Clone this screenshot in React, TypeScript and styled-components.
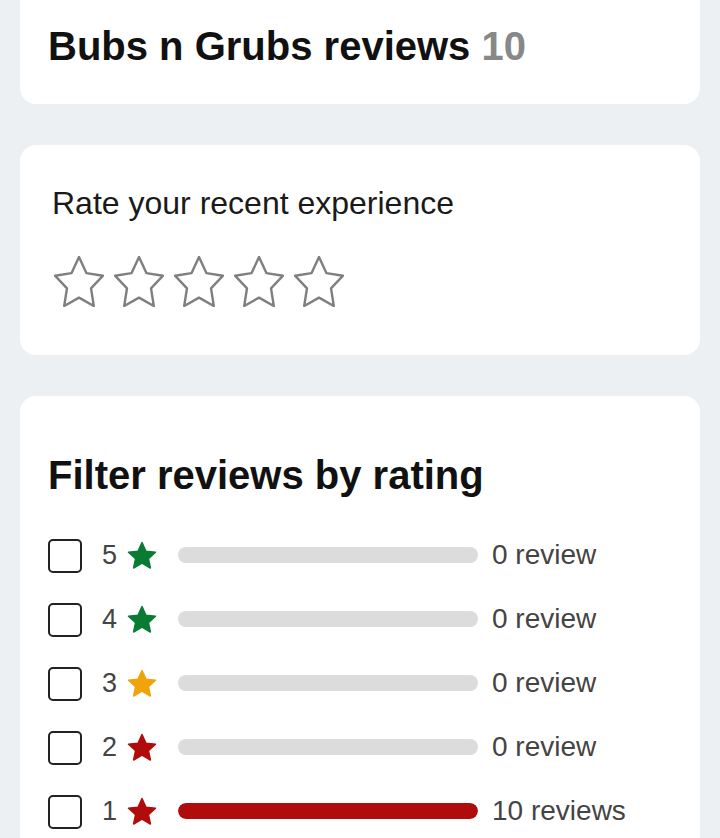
import styled, { createGlobalStyle } from "styled-components";

const GlobalStyle = createGlobalStyle`
  html, body {
    margin: 0;
    padding: 0;
    background: #edf0f2;
    font-family: "Liberation Sans", Arial, sans-serif;
  }
`;

const ratings = [
  { stars: 5, count: 0, color: "#0b7a33" },
  { stars: 4, count: 0, color: "#0b7a33" },
  { stars: 3, count: 0, color: "#f0a30a" },
  { stars: 2, count: 0, color: "#b00c0c" },
  { stars: 1, count: 10, color: "#b00c0c" },
];

const total = ratings.reduce((sum, r) => sum + r.count, 0);

const OUTLINE_POINTS =
  "25,1 32.4,17.1 49,19.7 37,32.3 39.8,50 25,41.6 10.2,50 13,32.3 1,19.7 17.6,17.1";

const SMALL_POINTS =
  "15,1.5 19,10.2 28.5,11.2 21.4,17.6 23.4,27 15,22.2 6.6,27 8.6,17.6 1.5,11.2 11,10.2";

function OutlineStar() {
  return (
    <svg width="50" height="51" viewBox="0 0 50 51">
      <polygon
        points={OUTLINE_POINTS}
        fill="none"
        stroke="#7f7f7f"
        strokeWidth="2.4"
        strokeLinejoin="round"
      />
    </svg>
  );
}

function SmallStar({ color }: { color: string }) {
  return (
    <svg width="30" height="29" viewBox="0 0 30 29">
      <polygon
        points={SMALL_POINTS}
        fill={color}
        stroke={color}
        strokeWidth="1.5"
        strokeLinejoin="round"
      />
    </svg>
  );
}

export default function App() {
  return (
    <Page>
      <GlobalStyle />

      <HeaderCard>
        <Heading>
          Bubs n Grubs reviews <Count>10</Count>
        </Heading>
      </HeaderCard>

      <RateCard>
        <RateTitle>Rate your recent experience</RateTitle>
        <StarRow>
          {[0, 1, 2, 3, 4].map((i) => (
            <StarButton key={i} aria-label={`${i + 1} stars`}>
              <OutlineStar />
            </StarButton>
          ))}
        </StarRow>
      </RateCard>

      <FilterCard>
        <Heading>Filter reviews by rating</Heading>
        <FilterList>
          {ratings.map((r) => (
            <FilterRow key={r.stars}>
              <Checkbox />
              <RatingNumber>{r.stars}</RatingNumber>
              <StarWrap>
                <SmallStar color={r.color} />
              </StarWrap>
              <Track>
                <Fill
                  style={{ width: `${total ? (r.count / total) * 100 : 0}%` }}
                />
              </Track>
              <ReviewCount>
                {r.count} {r.count > 1 ? "reviews" : "review"}
              </ReviewCount>
            </FilterRow>
          ))}
        </FilterList>
      </FilterCard>
    </Page>
  );
}

const Page = styled.div`
  padding: 0 20px;
  display: flex;
  flex-direction: column;
  gap: 41px;
  min-height: 838px;
  box-sizing: border-box;
`;

const Card = styled.section`
  background: #ffffff;
  border-radius: 16px;
  box-sizing: border-box;
`;

const HeaderCard = styled(Card)`
  margin-top: -20px;
  padding: 42px 28px 34px;
`;

const Heading = styled.h2`
  margin: 0;
  font-size: 40px;
  line-height: 48px;
  font-weight: 700;
  color: #111111;
`;

const Count = styled.span`
  color: #888888;
`;

const RateCard = styled(Card)`
  padding: 40px 32px 48px;
`;

const RateTitle = styled.p`
  margin: 0;
  font-size: 32px;
  line-height: 36px;
  color: #1a1a1a;
`;

const StarRow = styled.div`
  display: flex;
  gap: 10px;
  margin: 35px 0 0 2px;
`;

const StarButton = styled.button`
  border: 0;
  padding: 0;
  background: none;
  display: flex;
  cursor: pointer;
`;

const FilterCard = styled(Card)`
  padding: 55px 28px 20px;
`;

const FilterList = styled.div`
  margin-top: 24px;
  display: flex;
  flex-direction: column;
`;

const FilterRow = styled.label`
  display: flex;
  align-items: center;
  height: 64px;
`;

const Checkbox = styled.span`
  width: 34px;
  height: 34px;
  box-sizing: border-box;
  border: 2px solid #222222;
  border-radius: 5px;
  flex-shrink: 0;
  margin-top: 2px;
`;

const RatingNumber = styled.span`
  margin-left: 20px;
  width: 16px;
  font-size: 27px;
  color: #444444;
`;

const StarWrap = styled.span`
  display: flex;
  margin-left: 9px;
`;

const Track = styled.div`
  margin-left: 21px;
  width: 300px;
  height: 16px;
  border-radius: 8px;
  background: #dcdcdc;
  overflow: hidden;
`;

const Fill = styled.div`
  height: 100%;
  border-radius: 8px;
  background: #b00c0c;
`;

const ReviewCount = styled.span`
  margin-left: 14px;
  font-size: 28px;
  color: #444444;
`;
